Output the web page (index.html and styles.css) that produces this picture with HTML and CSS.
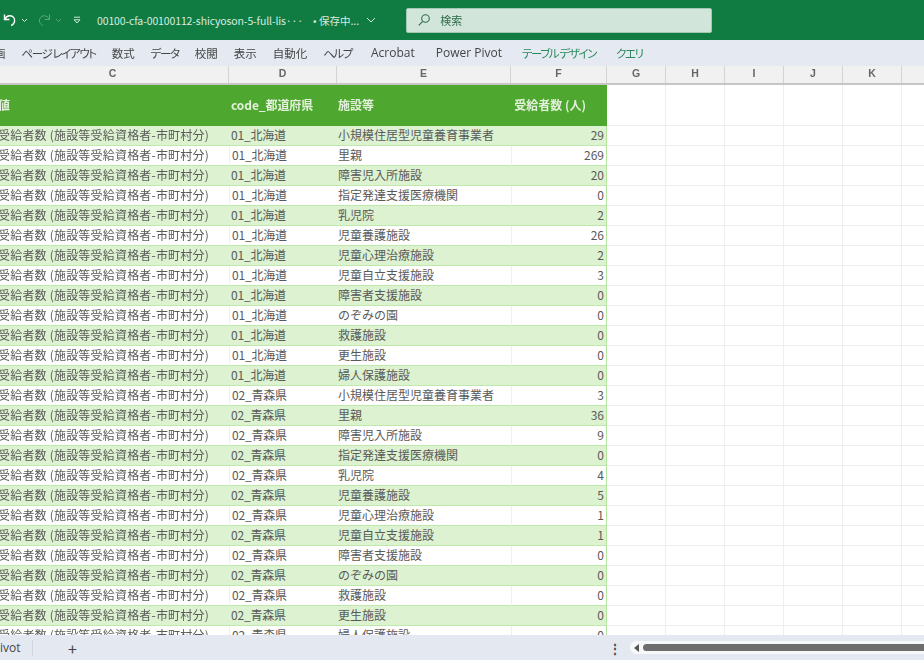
FILE: index.html
```html
<!DOCTYPE html>
<html lang="ja">
    <head>
        <meta charset="UTF-8" />
        <title>00100-cfa-00100112-shicyoson-5-full-list</title>
        <link rel="stylesheet" href="styles.css">
    </head>
    <body>
        <header class="titlebar">
            <svg class="undo" width="16" height="16" viewBox="0 0 16 16"><path d="M2.5 2.5v5h5M2.8 7.2C4 4.8 6 3.6 8.2 3.8c2.8.3 4.6 2.6 4.4 5.2-.2 2-1.5 3.6-3.4 4.6" /></svg>
            <svg class="caret" width="7" height="5" viewBox="0 0 7 5"><path d="M1 1l2.5 2.5L6 1" /></svg>
            <svg class="redo" width="16" height="16" viewBox="0 0 16 16"><path d="M13.5 2.5v5h-5M13.2 7.2C12 4.8 10 3.6 7.8 3.8 5 4.1 3.2 6.4 3.4 9c.2 2 1.5 3.6 3.4 4.6" /></svg>
            <svg class="caret dim" width="7" height="5" viewBox="0 0 7 5"><path d="M1 1l2.5 2.5L6 1" /></svg>
            <svg class="qat" width="8" height="9" viewBox="0 0 8 9"><path d="M1 1.2h6M1 3.8h6L4 7z" /></svg>
            <span class="filename">00100-cfa-00100112-shicyoson-5-full-lis···</span>
            <span class="saving">• 保存中...</span>
            <svg class="chevron" width="10" height="6" viewBox="0 0 10 6"><path d="M1 1l4 4 4-4" /></svg>
            <div class="search">
                <svg width="14" height="14" viewBox="0 0 14 14"><circle cx="8.5" cy="5.5" r="3.8" /><path d="M5.7 8.3L1.8 12.3" /></svg>
                <span>検索</span>
            </div>
        </header>

        <nav class="tabs">
            <span class="cut-tab">画</span>
            <span class="kana">ページ レイアウト</span>
            <span>数式</span>
            <span class="kana">データ</span>
            <span>校閲</span>
            <span>表示</span>
            <span>自動化</span>
            <span class="kana">ヘルプ</span>
            <span class="latin">Acrobat</span>
            <span class="latin wide">Power Pivot</span>
            <span class="context kana">テーブル デザイン</span>
            <span class="context kana">クエリ</span>
        </nav>

        <div class="col-heads grid">
            <div>C</div><div>D</div><div>E</div><div>F</div><div>G</div><div>H</div><div>I</div><div>J</div><div>K</div><div></div>
        </div>

        <main class="sheet">
            <div class="table-head grid">
                <div class="c">値</div><div class="d">code_都道府県</div><div class="e">施設等</div><div class="f">受給者数 (人)</div>
                <i></i><i></i><i></i><i></i><i></i><i></i>
            </div>

            <div class="row grid band"><div class="c">受給者数 (施設等受給資格者-市町村分)</div><div class="d">01_北海道</div><div class="e">小規模住居型児童養育事業者</div><div class="f">29</div><i></i><i></i><i></i><i></i><i></i><i></i></div>
            <div class="row grid"><div class="c">受給者数 (施設等受給資格者-市町村分)</div><div class="d">01_北海道</div><div class="e">里親</div><div class="f">269</div><i></i><i></i><i></i><i></i><i></i><i></i></div>
            <div class="row grid band"><div class="c">受給者数 (施設等受給資格者-市町村分)</div><div class="d">01_北海道</div><div class="e">障害児入所施設</div><div class="f">20</div><i></i><i></i><i></i><i></i><i></i><i></i></div>
            <div class="row grid"><div class="c">受給者数 (施設等受給資格者-市町村分)</div><div class="d">01_北海道</div><div class="e">指定発達支援医療機関</div><div class="f">0</div><i></i><i></i><i></i><i></i><i></i><i></i></div>
            <div class="row grid band"><div class="c">受給者数 (施設等受給資格者-市町村分)</div><div class="d">01_北海道</div><div class="e">乳児院</div><div class="f">2</div><i></i><i></i><i></i><i></i><i></i><i></i></div>
            <div class="row grid"><div class="c">受給者数 (施設等受給資格者-市町村分)</div><div class="d">01_北海道</div><div class="e">児童養護施設</div><div class="f">26</div><i></i><i></i><i></i><i></i><i></i><i></i></div>
            <div class="row grid band"><div class="c">受給者数 (施設等受給資格者-市町村分)</div><div class="d">01_北海道</div><div class="e">児童心理治療施設</div><div class="f">2</div><i></i><i></i><i></i><i></i><i></i><i></i></div>
            <div class="row grid"><div class="c">受給者数 (施設等受給資格者-市町村分)</div><div class="d">01_北海道</div><div class="e">児童自立支援施設</div><div class="f">3</div><i></i><i></i><i></i><i></i><i></i><i></i></div>
            <div class="row grid band"><div class="c">受給者数 (施設等受給資格者-市町村分)</div><div class="d">01_北海道</div><div class="e">障害者支援施設</div><div class="f">0</div><i></i><i></i><i></i><i></i><i></i><i></i></div>
            <div class="row grid"><div class="c">受給者数 (施設等受給資格者-市町村分)</div><div class="d">01_北海道</div><div class="e">のぞみの園</div><div class="f">0</div><i></i><i></i><i></i><i></i><i></i><i></i></div>
            <div class="row grid band"><div class="c">受給者数 (施設等受給資格者-市町村分)</div><div class="d">01_北海道</div><div class="e">救護施設</div><div class="f">0</div><i></i><i></i><i></i><i></i><i></i><i></i></div>
            <div class="row grid"><div class="c">受給者数 (施設等受給資格者-市町村分)</div><div class="d">01_北海道</div><div class="e">更生施設</div><div class="f">0</div><i></i><i></i><i></i><i></i><i></i><i></i></div>
            <div class="row grid band"><div class="c">受給者数 (施設等受給資格者-市町村分)</div><div class="d">01_北海道</div><div class="e">婦人保護施設</div><div class="f">0</div><i></i><i></i><i></i><i></i><i></i><i></i></div>
            <div class="row grid"><div class="c">受給者数 (施設等受給資格者-市町村分)</div><div class="d">02_青森県</div><div class="e">小規模住居型児童養育事業者</div><div class="f">3</div><i></i><i></i><i></i><i></i><i></i><i></i></div>
            <div class="row grid band"><div class="c">受給者数 (施設等受給資格者-市町村分)</div><div class="d">02_青森県</div><div class="e">里親</div><div class="f">36</div><i></i><i></i><i></i><i></i><i></i><i></i></div>
            <div class="row grid"><div class="c">受給者数 (施設等受給資格者-市町村分)</div><div class="d">02_青森県</div><div class="e">障害児入所施設</div><div class="f">9</div><i></i><i></i><i></i><i></i><i></i><i></i></div>
            <div class="row grid band"><div class="c">受給者数 (施設等受給資格者-市町村分)</div><div class="d">02_青森県</div><div class="e">指定発達支援医療機関</div><div class="f">0</div><i></i><i></i><i></i><i></i><i></i><i></i></div>
            <div class="row grid"><div class="c">受給者数 (施設等受給資格者-市町村分)</div><div class="d">02_青森県</div><div class="e">乳児院</div><div class="f">4</div><i></i><i></i><i></i><i></i><i></i><i></i></div>
            <div class="row grid band"><div class="c">受給者数 (施設等受給資格者-市町村分)</div><div class="d">02_青森県</div><div class="e">児童養護施設</div><div class="f">5</div><i></i><i></i><i></i><i></i><i></i><i></i></div>
            <div class="row grid"><div class="c">受給者数 (施設等受給資格者-市町村分)</div><div class="d">02_青森県</div><div class="e">児童心理治療施設</div><div class="f">1</div><i></i><i></i><i></i><i></i><i></i><i></i></div>
            <div class="row grid band"><div class="c">受給者数 (施設等受給資格者-市町村分)</div><div class="d">02_青森県</div><div class="e">児童自立支援施設</div><div class="f">1</div><i></i><i></i><i></i><i></i><i></i><i></i></div>
            <div class="row grid"><div class="c">受給者数 (施設等受給資格者-市町村分)</div><div class="d">02_青森県</div><div class="e">障害者支援施設</div><div class="f">0</div><i></i><i></i><i></i><i></i><i></i><i></i></div>
            <div class="row grid band"><div class="c">受給者数 (施設等受給資格者-市町村分)</div><div class="d">02_青森県</div><div class="e">のぞみの園</div><div class="f">0</div><i></i><i></i><i></i><i></i><i></i><i></i></div>
            <div class="row grid"><div class="c">受給者数 (施設等受給資格者-市町村分)</div><div class="d">02_青森県</div><div class="e">救護施設</div><div class="f">0</div><i></i><i></i><i></i><i></i><i></i><i></i></div>
            <div class="row grid band"><div class="c">受給者数 (施設等受給資格者-市町村分)</div><div class="d">02_青森県</div><div class="e">更生施設</div><div class="f">0</div><i></i><i></i><i></i><i></i><i></i><i></i></div>
            <div class="row grid"><div class="c">受給者数 (施設等受給資格者-市町村分)</div><div class="d">02_青森県</div><div class="e">婦人保護施設</div><div class="f">0</div><i></i><i></i><i></i><i></i><i></i><i></i></div>
        </main>

        <footer class="sheetbar">
            <span class="sheet-name">ivot</span>
            <span class="add-sheet">+</span>
            <span class="dots">⋮</span>
            <div class="scroll">
                <svg width="5" height="8" viewBox="0 0 5 8"><path d="M5 0v8L0 4z" /></svg>
                <div class="thumb"></div>
            </div>
        </footer>
    </body>
</html>
```

FILE: styles.css
```css
* {
    box-sizing: border-box;
    margin: 0;
    padding: 0;
}

html,
body {
    width: 924px;
    height: 660px;
    overflow: hidden;
}

body {
    display: flex;
    flex-direction: column;
    font-family: "Noto Sans CJK JP", "Noto Sans", sans-serif;
    font-size: 12px;
    color: #5a5a5a;
    background: #fff;
    filter: blur(0.5px);
}

svg {
    flex: none;
    fill: none;
    stroke: currentColor;
}

/* title bar */
.titlebar {
    display: flex;
    align-items: center;
    flex: none;
    height: 40px;
    padding-left: 2px;
    background: #107c41;
    color: #d8ebe0;
    font-size: 11px;
    white-space: nowrap;
}

.titlebar .undo {
    stroke-width: 1.4;
    color: #fff;
}

.titlebar .redo {
    margin-left: 8px;
    stroke-width: 1;
    color: #5da47f;
}

.caret {
    margin-left: 3px;
}

.caret.dim {
    margin-left: 3px;
    color: #5da47f;
}

.qat {
    margin-left: 11px;
    color: #cfe3d7;
}

.filename {
    width: 216px;
    margin-left: 16px;
    font-size: 10.5px;
    letter-spacing: -0.12px;
}

.saving {
    font-size: 10.5px;
}

.chevron {
    margin-left: 7px;
}

.search {
    display: flex;
    align-items: center;
    gap: 9px;
    width: 306px;
    height: 25px;
    margin-left: 30px;
    padding-left: 10px;
    background: #d2e5da;
    border: 1px solid #a3c8b2;
    border-radius: 2px;
    color: #2f6b4a;
}

.search svg {
    stroke-width: 1.1;
}

/* ribbon tabs */
.tabs {
    display: flex;
    align-items: center;
    gap: 16px;
    flex: none;
    height: 26px;
    margin-left: -6px;
    padding-bottom: 1px;
    background: #e4e9f2;
    box-shadow: 6px 0 0 #e4e9f2;
    color: #454545;
    font-size: 11.5px;
    font-feature-settings: "palt";
    white-space: nowrap;
}

.tabs .kana {
    letter-spacing: -1.4px;
}

.tabs .latin {
    margin-left: 3px;
    font-family: "Open Sans", sans-serif;
    font-size: 12px;
}

.tabs .latin.wide {
    margin-left: 5px;
}

.tabs .context {
    margin-left: 4px;
    color: #2d8a5c;
}

/* column widths are shared by the letters, the header and each row */
.grid {
    display: grid;
    grid-template-columns: 232px 108px 174px 96px 59px 59px 59px 59px 59px 59px;
    margin-left: -3px;
}

.col-heads {
    flex: none;
    height: 19px;
    background: #f1f1f1;
    border-bottom: 2px solid #c6c6c6;
    box-shadow: 3px 0 0 #f1f1f1;
    color: #666;
    font-family: "Liberation Sans", sans-serif;
    font-size: 10.5px;
    font-weight: 700;
    line-height: 15px;
    text-align: center;
}

.col-heads div {
    border-right: 1px solid #d4d4d4;
}

/* sheet */
.sheet {
    flex: 1;
    overflow: hidden;
}

.table-head {
    height: 41px;
    color: #e3f0dc;
    font-weight: 700;
    line-height: 40px;
}

.table-head div {
    height: 40px;
    background: #4ea72e;
    box-shadow: 0 1px 0 #4ea72e;
}

.row {
    height: 20px;
    line-height: 18px;
    white-space: nowrap;
}

.row div {
    height: 20px;
    border-bottom: 1px solid #bfe8ab;
    background: #fff;
}

.row.band div {
    background: #dcf2d0;
}

.row .d,
.row .f {
    border-left: 1px solid #efefef;
}

.row.band .d,
.row.band .f {
    border-left: 0;
}

.c {
    padding-left: 1px;
    letter-spacing: 0.2px;
    overflow: hidden;
}

.d {
    padding-left: 2px;
    letter-spacing: -0.2px;
}

.e {
    padding-left: 1px;
}

.f {
    padding-right: 2px;
    border-right: 1px solid #b3e59c;
    text-align: right;
}

.table-head .d {
    padding-left: 2px;
    letter-spacing: -0.1px;
}

.table-head .f {
    padding-right: 21px;
    border-right: 0;
}

.grid i {
    display: block;
    border-right: 1px solid #eee;
    border-bottom: 1px solid #eee;
}

/* sheet tabs and scrollbar */
.sheetbar {
    display: flex;
    align-items: center;
    flex: none;
    height: 25px;
    background: #e4e9f1;
    color: #444;
    font-size: 12px;
}

.sheet-name {
    width: 33px;
    border-right: 1px solid #d2d6dd;
    font-family: "Open Sans", sans-serif;
    line-height: 16px;
}

.add-sheet {
    margin-left: 35px;
    font-size: 16px;
    line-height: 16px;
}

.dots {
    margin-left: 532px;
    font-weight: 700;
    font-size: 12px;
}

.scroll {
    display: flex;
    align-items: center;
    gap: 4px;
    flex: 1;
    height: 13px;
    margin-left: 9px;
    padding-left: 4px;
    margin-right: -10px;
    background: #f7f8fa;
    border-radius: 7px;
}

.scroll svg {
    fill: #555;
    stroke: none;
}

.thumb {
    flex: 1;
    height: 7px;
    background: #6e6e6e;
    border-radius: 4px;
}
```
